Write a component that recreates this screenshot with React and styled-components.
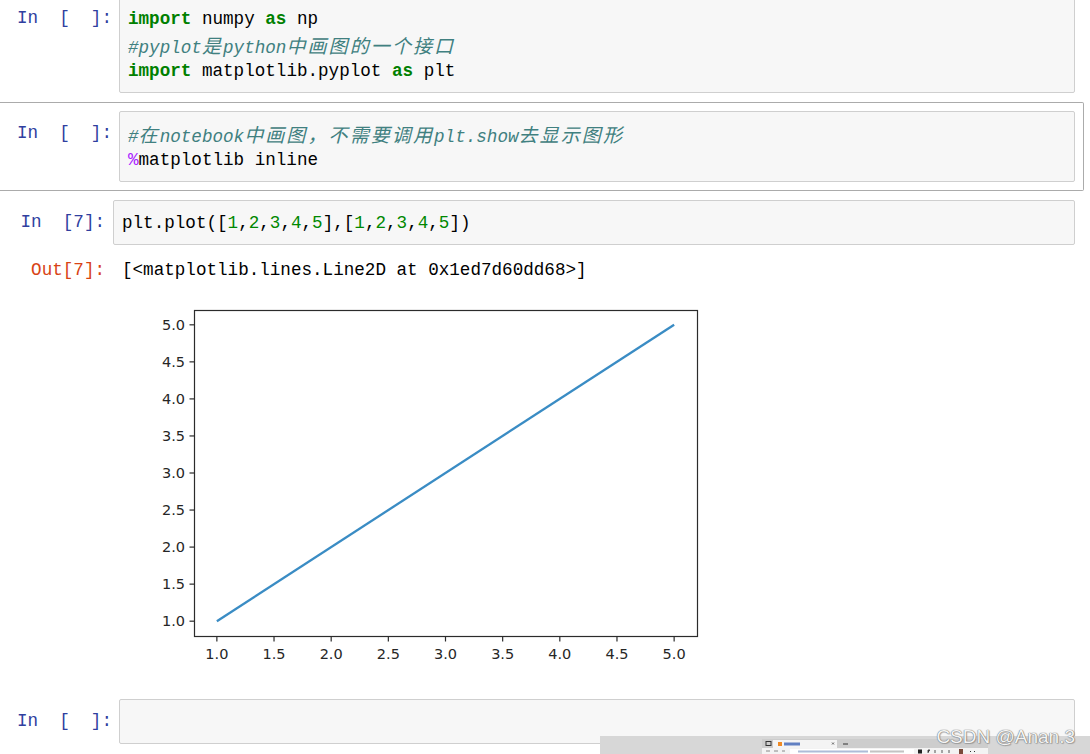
import React from "react";
import styled, { createGlobalStyle } from "styled-components";

const MONO = `"Liberation Mono", "Noto Sans CJK SC", monospace`;

const GlobalStyle = createGlobalStyle`
  html, body {
    margin: 0;
    padding: 0;
    background: #fff;
  }
  body {
    width: 1090px;
    height: 754px;
    overflow: hidden;
  }
`;

const Page = styled.div`
  position: relative;
  width: 1090px;
  height: 754px;
  overflow: hidden;
  background: #fff;
`;

const Notebook = styled.div`
  display: flex;
  flex-direction: column;
  width: 1084px;
  margin-top: -13px;

  font-family: ${MONO};
  font-size: 17.6px;
  color: #000;
`;

const Cell = styled.div`
  display: flex;
  flex-direction: column;
  padding: 8px 8px 8px 0;
  border: 1px solid ${({ $selected }) => ($selected ? "#ababab" : "transparent")};
  border-left: none;
  border-radius: 0 2px 2px 0;
`;

const Row = styled.div`
  display: flex;
  align-items: flex-start;
  margin-top: ${({ $gap }) => $gap || 0}px;
`;

const Prompt = styled.div`
  flex: none;
  box-sizing: border-box;
  width: ${({ $width }) => $width}px;
  padding: ${({ $top }) => $top}px ${({ $right }) => $right}px 0 0;
  text-align: right;
  white-space: pre;
  line-height: 26px;
  color: ${({ $out }) => ($out ? "#D84315" : "#303F9F")};
`;

const InputBox = styled.div`
  flex: 1;
  min-height: 26px;
  padding: 9px 8px 8px;
  border: 1px solid #cfcfcf;
  border-radius: 2px;
  background: #f7f7f7;
`;

const CodeLine = styled.div`
  height: 26px;
  line-height: 26px;
  white-space: pre;
`;

const Kw = styled.span`
  color: #008000;
  font-weight: bold;
`;

const Num = styled.span`
  color: #008800;
`;

const Magic = styled.span`
  color: #aa22ff;
`;

const Comment = styled.span`
  color: #408080;
  font-style: italic;
`;

const Han = styled.span`
  font-family: "Noto Sans CJK SC", sans-serif;
  font-size: 19px;
  letter-spacing: 2.1px;
`;

const OutputArea = styled.div`
  flex: 1;
  display: flex;
  flex-direction: column;
  padding-left: 9px;
`;

const OutputText = styled.div`
  height: 26px;
  line-height: 26px;
  white-space: pre;
`;

const PlotFigure = styled.svg`
  display: block;
  margin-top: 6px;
  font-family: "DejaVu Sans", sans-serif;
`;

const TaskStrip = styled.div`
  position: absolute;
  left: 600px;
  top: 736px;
  right: 0;
  bottom: 0;
  display: flex;
  align-items: flex-start;
  padding: 3px 0 0 162px;
  background: #d7d7d7;
`;

const Watermark = styled.div`
  position: absolute;
  right: 15px;
  top: 725px;
  font-family: "Liberation Sans", Arial, sans-serif;
  font-size: 19px;
  line-height: 24px;
  color: #f4f4f4;
  text-shadow: 0 0 1px #6d6d6d, 0 0 1px #6d6d6d, 1px 1px 1px rgba(0, 0, 0, 0.2);
`;

const TICKS = [1, 1.5, 2, 2.5, 3, 3.5, 4, 4.5, 5];
const AX = { x0: 72, x1: 575, y0: 21, y1: 347 };
const sx = v => AX.x0 + ((v - 0.8) * (AX.x1 - AX.x0)) / 4.4;
const sy = v => AX.y1 - ((v - 0.8) * (AX.y1 - AX.y0)) / 4.4;

const Plot = () => (
  <PlotFigure width="600" height="392" viewBox="0 0 600 392">
    <rect
      x={AX.x0 + 0.5}
      y={AX.y0 + 0.5}
      width={AX.x1 - AX.x0}
      height={AX.y1 - AX.y0}
      fill="#fff"
      stroke="#2b2b2b"
      strokeWidth="1.2"
    />
    {TICKS.map(t => (
      <g key={"y" + t}>
        <line x1={AX.x0 - 4.5} x2={AX.x0 + 0.5} y1={sy(t)} y2={sy(t)} stroke="#2b2b2b" strokeWidth="1.2" />
        <text x={AX.x0 - 9} y={sy(t)} textAnchor="end" dominantBaseline="central" fontSize="14.5" fill="#262626">
          {t.toFixed(1)}
        </text>
      </g>
    ))}
    {TICKS.map(t => (
      <g key={"x" + t}>
        <line x1={sx(t)} x2={sx(t)} y1={AX.y1 + 0.5} y2={AX.y1 + 5.5} stroke="#2b2b2b" strokeWidth="1.2" />
        <text x={sx(t)} y={AX.y1 + 18} textAnchor="middle" dominantBaseline="central" fontSize="14.5" fill="#262626">
          {t.toFixed(1)}
        </text>
      </g>
    ))}
    <line x1={sx(1)} y1={sy(1)} x2={sx(5)} y2={sy(5)} stroke="#3a8cc4" strokeWidth="2.3" />
  </PlotFigure>
);

// tiny thumbnail of a browser window sitting in the task strip
const MiniBrowser = () => (
  <svg width="226" height="15" viewBox="0 0 226 15">
    <rect x="0" y="0" width="226" height="15" fill="#cdcdcd" />
    <rect x="4" y="2.5" width="5" height="4" fill="none" stroke="#333" strokeWidth="1" />
    <rect x="11" y="1" width="64" height="8" fill="#f4f4f4" />
    <rect x="16" y="3" width="4" height="4" fill="#f08a24" />
    <rect x="22" y="3.5" width="16" height="3" fill="#3c63b5" opacity="0.8" />
    <path d="M70 3.5 l2 2 m0 -2 l-2 2" stroke="#444" strokeWidth="0.8" />
    <line x1="81" y1="5" x2="86" y2="5" stroke="#333" strokeWidth="1" />
    <rect x="0" y="9" width="226" height="6" fill="#f3f3f3" />
    <path d="M4 12 h4 M12 12 h4 M20 12 h3" stroke="#888" strokeWidth="1" />
    <rect x="28" y="10" width="124" height="5" fill="#fff" />
    <rect x="36" y="11.5" width="70" height="2" fill="#8aa0c8" opacity="0.7" />
    <rect x="108" y="11.5" width="34" height="2" fill="#aaa" opacity="0.7" />
    <rect x="156" y="10.5" width="4" height="4" fill="#222" />
    <path d="M166 14 v-3 h2 M173 14 v-3 M180 14 v-3 M187 14 v-3" stroke="#555" strokeWidth="1" />
    <rect x="197" y="10" width="4" height="5" fill="#7a4a3a" />
    <path d="M208 12.5 h1 M212 12.5 h1" stroke="#333" strokeWidth="1" />
  </svg>
);

const nums = [1, 2, 3, 4, 5];
const NumList = () => (
  <>
    [
    {nums.map((n, i) => (
      <React.Fragment key={n}>
        <Num>{n}</Num>
        {i < nums.length - 1 ? "," : ""}
      </React.Fragment>
    ))}
    ]
  </>
);

const App = () => (
  <Page>
    <GlobalStyle />
    <Notebook>
      <Cell>
        <Row>
          <Prompt $width={119} $right={7} $top={9}>{"In  [  ]:"}</Prompt>
          <InputBox>
            <CodeLine>
              <Kw>import</Kw> numpy <Kw>as</Kw> np
            </CodeLine>
            <CodeLine>
              <Comment>
                #pyplot<Han>是</Han>python<Han>中画图的一个接口</Han>
              </Comment>
            </CodeLine>
            <CodeLine>
              <Kw>import</Kw> matplotlib.pyplot <Kw>as</Kw> plt
            </CodeLine>
          </InputBox>
        </Row>
      </Cell>

      <Cell $selected>
        <Row>
          <Prompt $width={119} $right={7} $top={9}>{"In  [  ]:"}</Prompt>
          <InputBox>
            <CodeLine>
              <Comment>
                #<Han>在</Han>notebook<Han>中画图，不需要调用</Han>plt.show<Han>去显示图形</Han>
              </Comment>
            </CodeLine>
            <CodeLine>
              <Magic>%</Magic>matplotlib inline
            </CodeLine>
          </InputBox>
        </Row>
      </Cell>

      <Cell>
        <Row>
          <Prompt $width={113} $right={8} $top={9}>{"In  [7]:"}</Prompt>
          <InputBox>
            <CodeLine>
              plt.plot(
              <NumList />,<NumList />)
            </CodeLine>
          </InputBox>
        </Row>
        <Row $gap={12}>
          <Prompt $out $width={113} $right={8} $top={0}>{"Out[7]:"}</Prompt>
          <OutputArea>
            <OutputText>{"[<matplotlib.lines.Line2D at 0x1ed7d60dd68>]"}</OutputText>
            <Plot />
          </OutputArea>
        </Row>
      </Cell>

      <Cell>
        <Row>
          <Prompt $width={119} $right={7} $top={9}>{"In  [  ]:"}</Prompt>
          <InputBox>
            <CodeLine />
          </InputBox>
        </Row>
      </Cell>
    </Notebook>

    <TaskStrip>
      <MiniBrowser />
    </TaskStrip>
    <Watermark>CSDN @Anan.3</Watermark>
  </Page>
);

export default App;
